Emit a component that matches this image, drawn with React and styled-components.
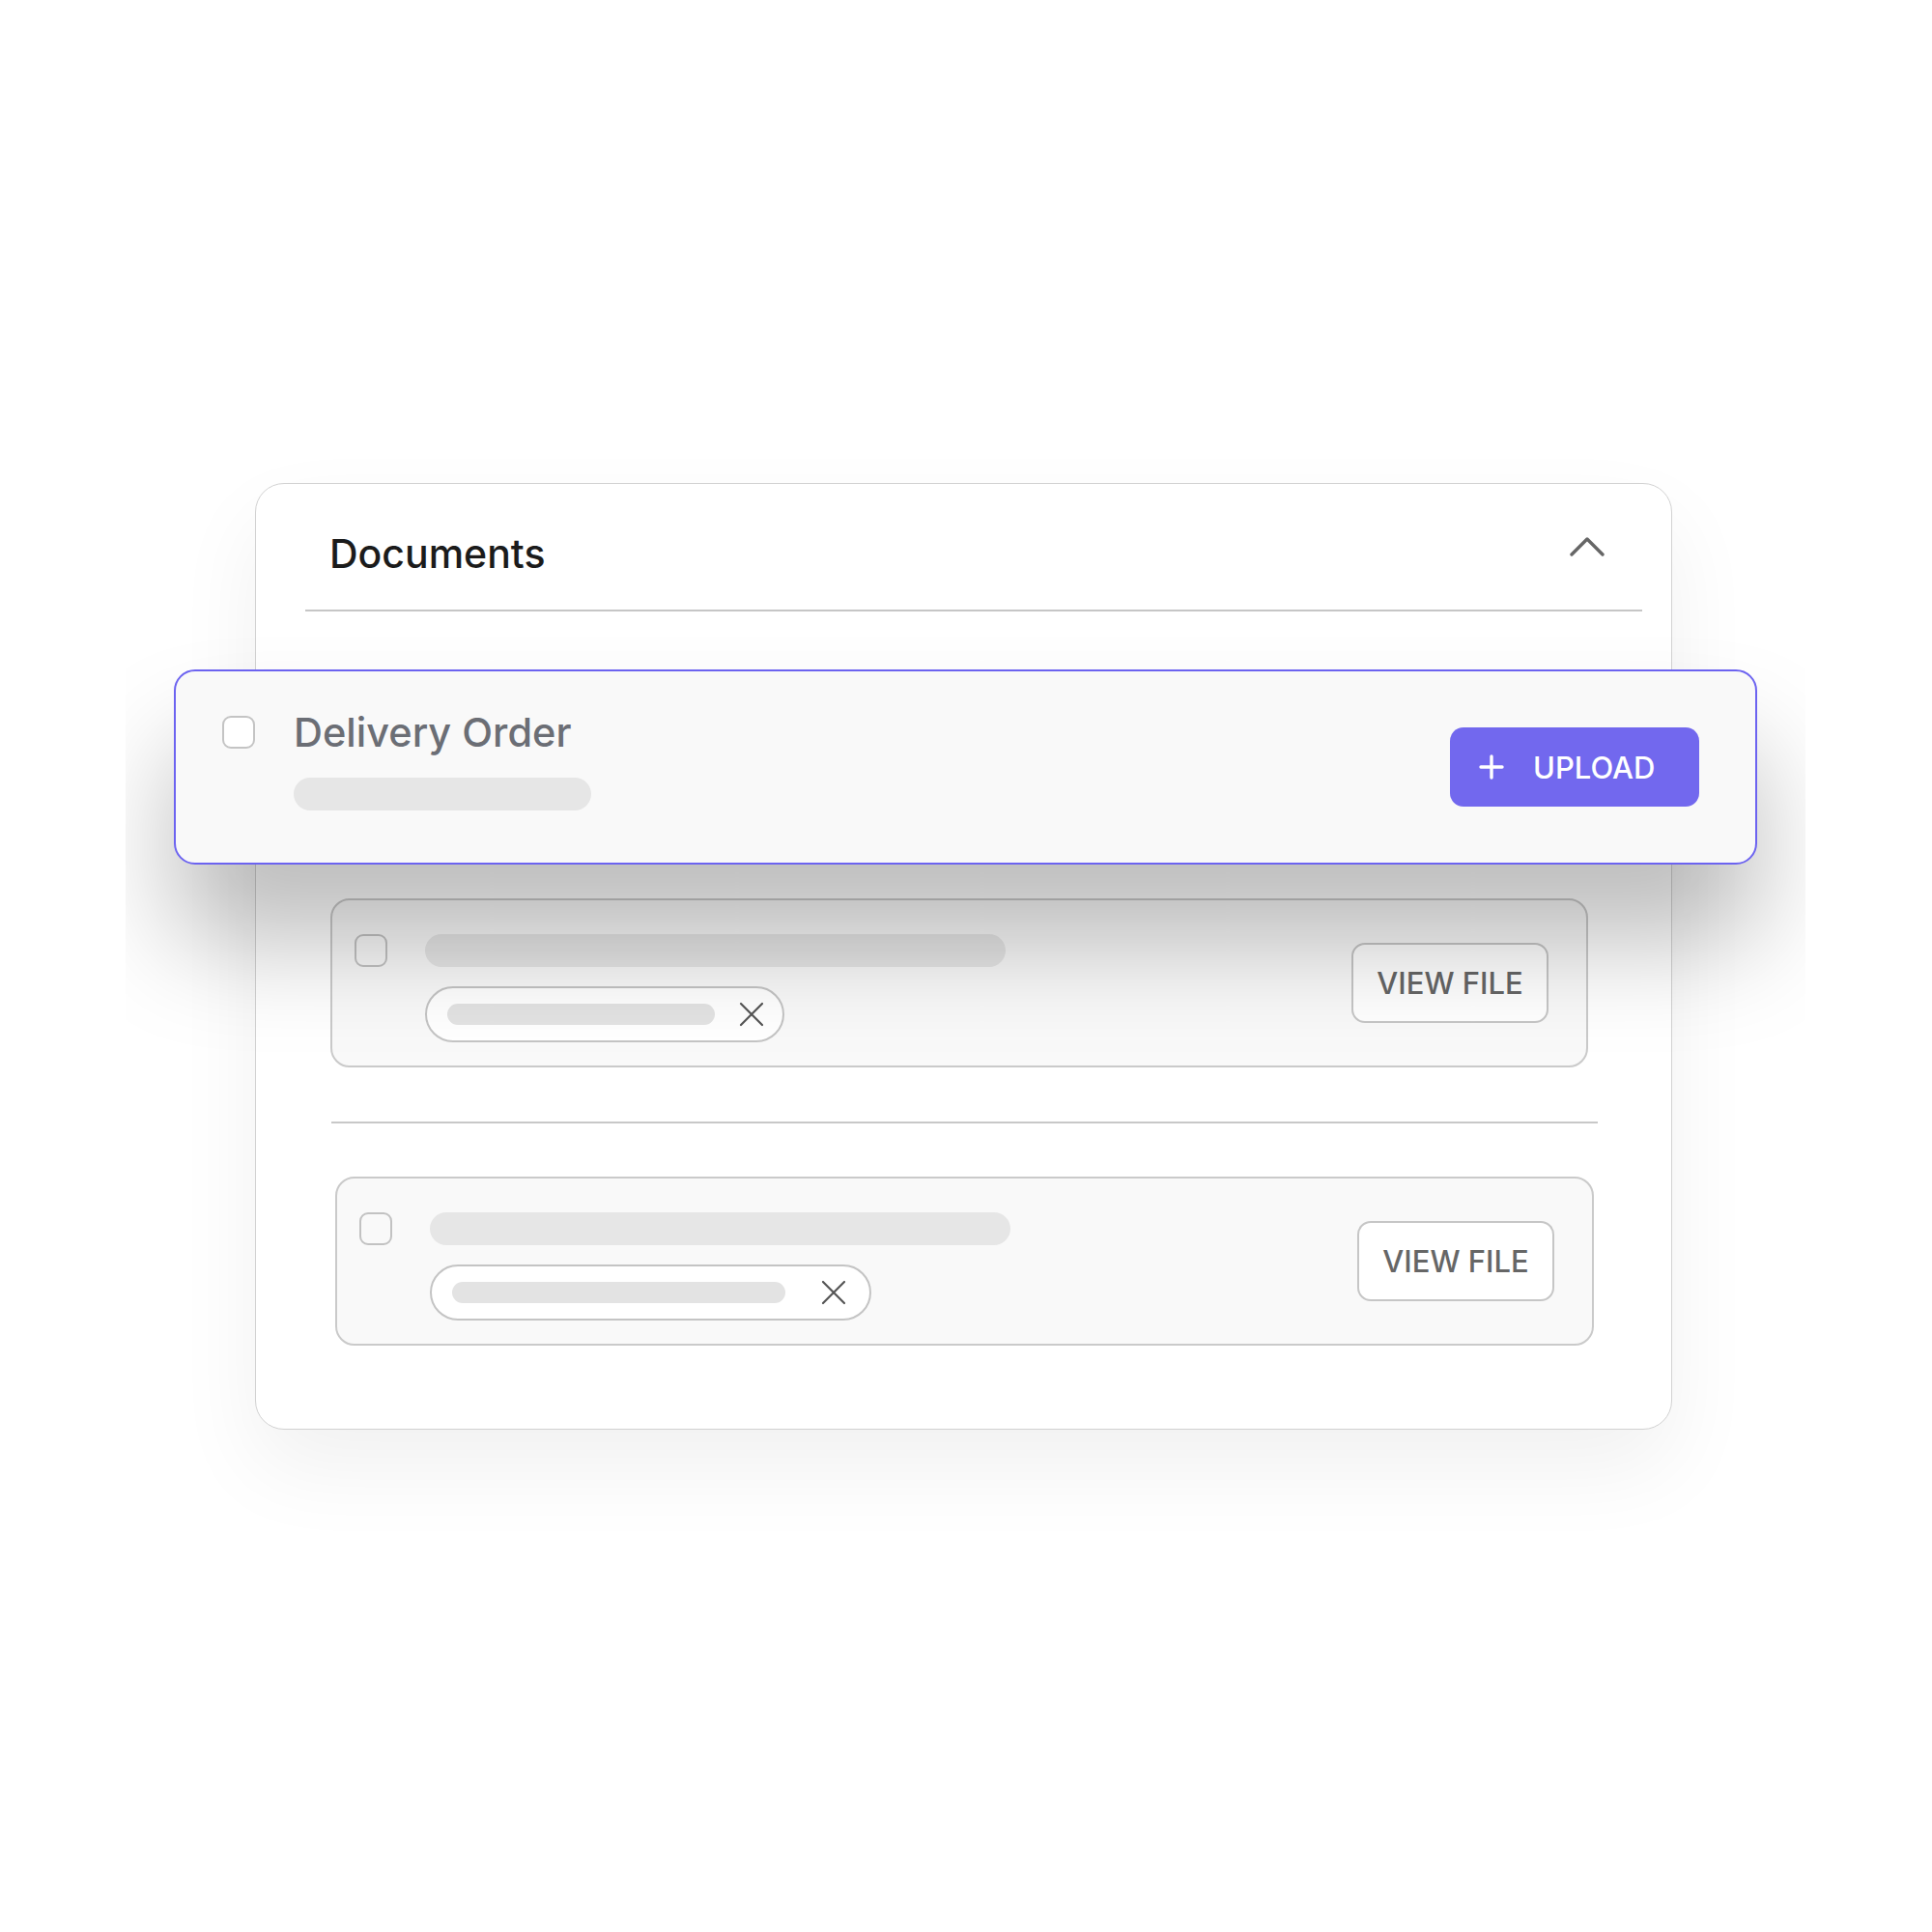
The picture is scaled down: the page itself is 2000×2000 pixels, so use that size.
import React from "react";
import styled, { createGlobalStyle } from "styled-components";

const Global = createGlobalStyle`
  html, body { margin: 0; padding: 0; background: #ffffff; }
  body { font-family: Inter, "Noto Sans", "Liberation Sans", sans-serif; }
  * { box-sizing: border-box; }
`;

const Stage = styled.div`
  margin-left: 130px;
  width: 1739px;
  padding: 500px 0 500px 134px;
  overflow: hidden;
`;

const Card = styled.section`
  width: 1467px;
  background: #ffffff;
  border: 1px solid #d2d2d2;
  border-radius: 30px;
  padding: 0 30px 86px 51px;
  box-shadow: 0 40px 90px rgba(0, 0, 0, 0.06);
  display: flex;
  flex-direction: column;
`;

const Header = styled.div`
  height: 130px;
  padding: 13px 39px 0 25px;
  display: flex;
  align-items: center;
  justify-content: space-between;
`;

const Title = styled.h2`
  margin: 0;
  font-size: 41px;
  line-height: 48px;
  font-weight: 500;
  color: #1b1b1b;
`;

const Chevron = styled.svg`
  width: 36px;
  height: 22px;
  margin-bottom: 14px;
`;

const Divider = styled.div`
  height: 2px;
  background: ${(p) => p.$color || "#c6c6c6"};
  margin: ${(p) => p.$margin || "0"};
`;

const Floating = styled.div`
  position: relative;
  z-index: 1;
  margin: 60px -119px 0 -136px;
  height: 202px;
  background: #f9f9f9;
  border: 2px solid #6c63f0;
  border-radius: 22px;
  padding: 38px 58px 0 48px;
  display: flex;
  align-items: flex-start;
  box-shadow: 0 80px 110px rgba(0, 0, 0, 0.26);
`;

const Check = styled.span`
  flex: none;
  width: 34px;
  height: 34px;
  border: 2px solid ${(p) => p.$border || "#c2c2c2"};
  border-radius: 9px;
  background: ${(p) => p.$bg || "transparent"};
  margin-top: ${(p) => p.$top || 0}px;
`;

const Body = styled.div`
  flex: 1;
  display: flex;
  flex-direction: column;
  align-items: flex-start;
  margin-left: ${(p) => p.$gap}px;
`;

const DocName = styled.div`
  font-size: 41.5px;
  line-height: 50px;
  font-weight: 500;
  color: #6b6e75;
`;

const Bar = styled.div`
  width: ${(p) => p.$w}px;
  height: ${(p) => p.$h || 34}px;
  border-radius: 999px;
  background: ${(p) => p.$bg || "#e6e6e6"};
  margin-top: ${(p) => p.$top || 0}px;
  flex: none;
`;

const UploadButton = styled.button`
  align-self: center;
  margin-top: -38px;
  width: 258px;
  height: 82px;
  border: none;
  border-radius: 14px;
  background: #7268ee;
  color: #ffffff;
  font-family: inherit;
  font-size: 31px;
  font-weight: 500;
  display: flex;
  align-items: center;
  padding: 0 0 0 30px;
  gap: 30px;
`;

const Row = styled.div`
  margin: ${(p) => p.$margin};
  height: 175px;
  background: #f9f9f9;
  border: 2px solid #cacaca;
  border-radius: 20px;
  padding: 35px 39px 0 23px;
  display: flex;
  align-items: flex-start;
`;

const Chip = styled.div`
  margin-top: 20px;
  width: ${(p) => p.$w}px;
  height: 58px;
  border: 2px solid #c4c4c4;
  border-radius: 29px;
  background: #ffffff;
  display: flex;
  align-items: center;
  padding-left: 21px;
  gap: ${(p) => p.$gap}px;
`;

const ViewButton = styled.button`
  align-self: center;
  margin-top: -35px;
  width: 204px;
  height: 83px;
  border: 2px solid #c6c6c6;
  border-radius: 14px;
  background: #ffffff;
  color: #666666;
  font-family: inherit;
  font-size: 31px;
  font-weight: 500;
  display: flex;
  align-items: center;
  justify-content: center;
`;

const Icon = styled.svg`
  flex: none;
  width: ${(p) => p.$size}px;
  height: ${(p) => p.$size}px;
`;

const XIcon = () => (
  <Icon $size={26} viewBox="0 0 26 26">
    <path d="M2 2 L24 24 M24 2 L2 24" stroke="#555" strokeWidth="2.2" strokeLinecap="round" fill="none" />
  </Icon>
);

const PlusIcon = () => (
  <Icon $size={26} viewBox="0 0 26 26">
    <path d="M13 2 V24 M2 13 H24" stroke="#fff" strokeWidth="3.4" strokeLinecap="round" fill="none" />
  </Icon>
);

const FileRow = ({ margin, chipW, innerW, xGap }) => (
  <Row $margin={margin}>
    <Check $top={0} />
    <Body $gap={39}>
      <Bar $w={601} />
      <Chip $w={chipW} $gap={xGap}>
        <Bar $w={innerW} $h={22} $bg="#e3e3e3" />
        <XIcon />
      </Chip>
    </Body>
    <ViewButton>VIEW FILE</ViewButton>
  </Row>
);

export default function App() {
  return (
    <>
      <Global />
      <Stage>
        <Card>
          <Header>
            <Title>Documents</Title>
            <Chevron viewBox="0 0 36 22">
              <path d="M2 19 L18 3 L34 19" stroke="#666" strokeWidth="3.4" strokeLinecap="round" strokeLinejoin="round" fill="none" />
            </Chevron>
          </Header>
          <Divider />
          <Floating>
            <Check $top={8} $bg="#ffffff" $border="#c4c4c4" />
            <Body $gap={40}>
              <DocName>Delivery Order</DocName>
              <Bar $w={308} $top={22} />
            </Body>
            <UploadButton>
              <PlusIcon />
              UPLOAD
            </UploadButton>
          </Floating>
          <FileRow margin="35px 56px 0 26px" chipW={372} innerW={277} xGap={25} />
          <Divider $color="#c8c8c8" $margin="56px 46px 0 27px" />
          <FileRow margin="55px 50px 0 31px" chipW={457} innerW={345} xGap={37} />
        </Card>
      </Stage>
    </>
  );
}
